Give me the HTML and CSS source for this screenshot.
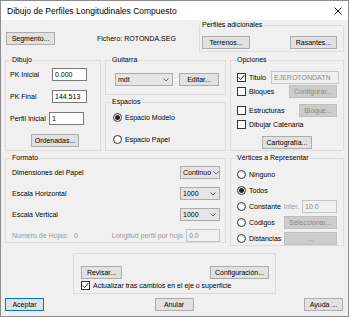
FILE: index.html
```html
<!DOCTYPE html>
<html lang="es">
<head>
    <meta charset="UTF-8">
    <title>Dibujo de Perfiles Longitudinales Compuesto</title>
    <link rel="stylesheet" href="styles.css">
</head>
<body>

<div class="window">
    <div class="titlebar">
        <span class="title">Dibujo de Perfiles Longitudinales Compuesto</span>
        <svg class="close" width="8" height="8" viewBox="0 0 8 8"><path d="M0.5 0.5 L7.5 7.5 M7.5 0.5 L0.5 7.5" stroke="#222" stroke-width="1" fill="none"/></svg>
    </div>

    <div class="content">
        <div class="top-row">
            <div class="file-line">
                <button class="btn btn-segmento">Segmento...</button>
                <span class="fichero">Fichero: ROTONDA.SEG</span>
            </div>
            <fieldset class="group group-perfiles">
                <legend>Perfiles adicionales</legend>
                <div class="perfiles-buttons">
                    <button class="btn btn-terrenos">Terrenos...</button>
                    <button class="btn btn-rasantes">Rasantes...</button>
                </div>
            </fieldset>
        </div>

        <div class="main-grid">
            <!-- Dibujo -->
            <fieldset class="group group-dibujo">
                <legend>Dibujo</legend>
                <div class="group-body dibujo-body">
                    <div class="field-row">
                        <span class="field-label">PK Inicial</span>
                        <input type="text" class="textbox tb-pk" value="0.000">
                    </div>
                    <div class="field-row">
                        <span class="field-label">PK Final</span>
                        <input type="text" class="textbox tb-pk" value="144.513">
                    </div>
                    <div class="field-row">
                        <span class="field-label field-label-perfil">Perfil Inicial</span>
                        <input type="text" class="textbox tb-pk" value="1">
                    </div>
                    <button class="btn btn-ordenadas">Ordenadas...</button>
                </div>
            </fieldset>

            <!-- Guitarra + Espacios -->
            <div class="middle-col">
                <fieldset class="group group-guitarra">
                    <legend>Guitarra</legend>
                    <div class="guitarra-row">
                        <div class="combo combo-guitarra"><span>mdt</span><svg width="6" height="4" viewBox="0 0 6 4"><path d="M0.5 0.5 L3 3 L5.5 0.5" stroke="#666" fill="none"/></svg></div>
                        <button class="btn btn-editar">Editar...</button>
                    </div>
                </fieldset>
                <fieldset class="group group-espacios">
                    <legend>Espacios</legend>
                    <div class="group-body espacios-body">
                        <div class="opt-row"><span class="radio checked"></span>Espacio Modelo</div>
                        <div class="opt-row"><span class="radio"></span>Espacio Papel</div>
                    </div>
                </fieldset>
            </div>

            <!-- Opciones -->
            <fieldset class="group group-opciones">
                <legend>Opciones</legend>
                <div class="group-body opciones-body">
                    <div class="opt-row">
                        <span class="check"><svg width="7" height="7" viewBox="0 0 7 7"><path d="M0.6 3.4 L2.6 5.6 L6.4 0.9" stroke="#222" stroke-width="1" fill="none"/></svg></span>Titulo
                        <input type="text" class="textbox tb-titulo" value="EJEROTONDATN" disabled>
                    </div>
                    <div class="opt-row row-tight">
                        <span class="check"></span>Bloques
                        <button class="btn btn-configurar" disabled>Configurar...</button>
                    </div>
                    <div class="opt-row row-loose">
                        <span class="check"></span>Estructuras
                        <button class="btn btn-bloque" disabled>Bloque...</button>
                    </div>
                    <div class="opt-row row-tight">
                        <span class="check"></span>Dibujar Catenaria
                    </div>
                    <button class="btn btn-cartografia">Cartografía...</button>
                </div>
            </fieldset>

            <!-- Formato -->
            <fieldset class="group group-formato">
                <legend>Formato</legend>
                <div class="group-body formato-body">
                    <div class="formato-row">
                        <span>Dimensiones del Papel</span>
                        <div class="combo combo-small"><span>Continuo</span><svg width="6" height="4" viewBox="0 0 6 4"><path d="M0.5 0.5 L3 3 L5.5 0.5" stroke="#666" fill="none"/></svg></div>
                    </div>
                    <div class="formato-row">
                        <span>Escala Horizontal</span>
                        <div class="combo combo-small"><span>1000</span><svg width="6" height="4" viewBox="0 0 6 4"><path d="M0.5 0.5 L3 3 L5.5 0.5" stroke="#666" fill="none"/></svg></div>
                    </div>
                    <div class="formato-row">
                        <span>Escala Vertical</span>
                        <div class="combo combo-small"><span>1000</span><svg width="6" height="4" viewBox="0 0 6 4"><path d="M0.5 0.5 L3 3 L5.5 0.5" stroke="#666" fill="none"/></svg></div>
                    </div>
                    <div class="formato-row hojas-row">
                        <span class="hojas-label">Numero de Hojas:</span>
                        <span class="hojas-value">0</span>
                        <span class="longitud-label">Longitud perfil por hoja</span>
                        <input type="text" class="textbox tb-longitud" value="0.0" disabled>
                    </div>
                </div>
            </fieldset>

            <!-- Vertices -->
            <fieldset class="group group-vertices">
                <legend>Vértices a Representar</legend>
                <div class="group-body vertices-body">
                    <div class="opt-row"><span class="radio"></span>Ninguno</div>
                    <div class="opt-row"><span class="radio checked"></span>Todos</div>
                    <div class="opt-row">
                        <span class="vert-opt"><span class="radio"></span>Constante</span>
                        <span class="vert-ctrl inter-ctrl">
                            <span class="disabled-text">Inter.</span>
                            <input type="text" class="textbox tb-inter" value="10.0" disabled>
                        </span>
                    </div>
                    <div class="opt-row">
                        <span class="vert-opt"><span class="radio"></span>Códigos</span>
                        <button class="btn vert-ctrl" disabled>Seleccionar...</button>
                    </div>
                    <div class="opt-row">
                        <span class="vert-opt"><span class="radio"></span>Distancias</span>
                        <button class="btn vert-ctrl" disabled>...</button>
                    </div>
                </div>
            </fieldset>
        </div>

        <fieldset class="group group-revisar">
            <div class="revisar-row">
                <button class="btn btn-revisar">Revisar...</button>
                <button class="btn btn-config">Configuración...</button>
            </div>
            <div class="opt-row actualizar-row">
                <span class="check"><svg width="7" height="7" viewBox="0 0 7 7"><path d="M0.6 3.4 L2.6 5.6 L6.4 0.9" stroke="#222" stroke-width="1" fill="none"/></svg></span>Actualizar tras cambios en el eje o superficie
            </div>
        </fieldset>

        <div class="dialog-buttons">
            <button class="btn btn-main btn-default">Aceptar</button>
            <button class="btn btn-main">Anular</button>
            <button class="btn btn-main">Ayuda ...</button>
        </div>
    </div>
</div>

</body>
</html>
```

FILE: styles.css
```css
* {
    box-sizing: border-box;
}
body {
    margin: 0;
    font-family: "Liberation Sans", Arial, sans-serif;
    font-size: 7px;
    color: #000;
    background: #fff;
}
.window {
    width: 349px;
    height: 317px;
    border: 1px solid #8c8c8c;
    background: #f0f0f0;
    display: flex;
    flex-direction: column;
}
.titlebar {
    height: 19px;
    background: #fff;
    display: flex;
    align-items: center;
    justify-content: space-between;
    padding: 0 6px;
    flex-shrink: 0;
}
.title {
    font-size: 8.5px;
}
.content {
    padding: 0 4px;
    display: flex;
    flex-direction: column;
}

/* controls */
.btn {
    font: inherit;
    height: 13px;
    padding: 0;
    border: 1px solid #adadad;
    background: #e1e1e1;
    color: #000;
    line-height: 11px;
}
.btn:disabled {
    background: #cccccc;
    border-color: #bfbfbf;
    color: #8a8a8a;
}
.textbox {
    font: inherit;
    height: 13px;
    padding: 0 2px;
    border: 1px solid #7a7a7a;
    background: #fff;
    color: #000;
}
.textbox:disabled {
    background: #f0f0f0;
    border-color: #c4c4c4;
    color: #8a8a8a;
}
.combo {
    height: 13px;
    border: 1px solid #acacac;
    background: #e5e5e5;
    display: flex;
    align-items: center;
    justify-content: space-between;
    gap: 2px;
    padding: 0 3px 0 2px;
}
.combo svg {
    flex-shrink: 0;
}
.check {
    width: 9px;
    height: 9px;
    border: 1px solid #333;
    background: #fff;
    margin-right: 3px;
    display: inline-flex;
    align-items: center;
    justify-content: center;
    flex-shrink: 0;
}
.radio {
    width: 9px;
    height: 9px;
    border: 1px solid #333;
    border-radius: 50%;
    background: #fff;
    margin-right: 3px;
    display: inline-flex;
    align-items: center;
    justify-content: center;
    flex-shrink: 0;
}
.radio.checked::after {
    content: "";
    width: 5px;
    height: 5px;
    border-radius: 50%;
    background: #222;
}
.disabled-text {
    color: #9a9a9a;
}

/* group boxes */
.group {
    margin: 0;
    padding: 0;
    border: 1px solid #dcdcdc;
    min-width: 0;
}
.group legend {
    padding: 0 1px;
    margin-left: 5px;
    line-height: 10px;
}
.group-body {
    display: flex;
    flex-direction: column;
}
.opt-row {
    display: flex;
    align-items: center;
    height: 13px;
}

/* top row */
.top-row {
    display: flex;
    justify-content: space-between;
    height: 33px;
}
.file-line {
    display: flex;
    align-items: center;
    height: 13px;
    margin-top: 12px;
}
.btn-segmento {
    width: 49px;
    margin-left: 1px;
}
.fichero {
    margin-left: 42px;
}
.group-perfiles {
    width: 145px;
    height: 32px;
}
.group-perfiles legend {
    margin-left: 1px;
}
.perfiles-buttons {
    display: flex;
    justify-content: space-between;
    padding: 6px 6px 0 2px;
}
.btn-terrenos {
    width: 48px;
}
.btn-rasantes {
    width: 47px;
}

/* main grid */
.main-grid {
    display: grid;
    grid-template-columns: 96px 121px 114px;
    column-gap: 4px;
    row-gap: 2px;
    margin-top: 2px;
    align-items: start;
}
.group-dibujo,
.group-opciones {
    height: 96px;
}
.dibujo-body {
    padding: 3px 0 0 4px;
    gap: 9px;
}
.field-row {
    display: flex;
    align-items: center;
    height: 13px;
}
.field-label {
    width: 42px;
}
.field-label-perfil {
    width: 39px;
}
.tb-pk {
    width: 35px;
}
.btn-ordenadas {
    width: 48px;
    align-self: center;
}

.middle-col {
    display: flex;
    flex-direction: column;
    gap: 2px;
    height: 96px;
}
.group-guitarra {
    height: 40px;
}
.guitarra-row {
    display: flex;
    gap: 6px;
    padding: 8px 0 0 9px;
}
.combo-guitarra {
    width: 58px;
}
.btn-editar {
    width: 40px;
}
.group-espacios {
    flex: 1;
}
.espacios-body {
    padding: 4px 0 0 7px;
    gap: 9px;
}

.opciones-body {
    padding: 6px 4px 0 6px;
}
.row-tight {
    margin-top: 1px;
}
.row-loose {
    margin-top: 6px;
}
.tb-titulo {
    width: 68px;
    margin-left: auto;
    background: #fff;
}
.btn-configurar {
    width: 48px;
    margin-left: auto;
    margin-right: 2px;
}
.btn-bloque {
    width: 38px;
    margin-left: auto;
    margin-right: 2px;
}
.btn-cartografia {
    width: 50px;
    margin: 5px 0 0 25px;
}

.group-formato {
    grid-column: 1 / 3;
    height: 90px;
}
.formato-body {
    padding: 3px 5px 0 6px;
    gap: 8px;
}
.formato-row {
    display: flex;
    align-items: center;
    justify-content: space-between;
    height: 13px;
}
.combo-small {
    width: 40px;
}
.hojas-row {
    justify-content: flex-start;
    color: #9a9a9a;
}
.hojas-label {
    width: 62px;
}
.longitud-label {
    margin-left: auto;
    margin-right: 3px;
}
.tb-longitud {
    width: 34px;
}

.group-vertices {
    height: 93px;
}
.vertices-body {
    padding: 5px 6px 0 6px;
    gap: 3px;
}
.vert-opt {
    display: flex;
    align-items: center;
    width: 47px;
}
.vert-ctrl {
    width: 54px;
}
.inter-ctrl {
    display: flex;
    align-items: center;
    justify-content: space-between;
}
.tb-inter {
    width: 35px;
}

/* bottom */
.group-revisar {
    width: 203px;
    height: 41px;
    margin: 7px 0 0 68px;
    padding: 12px 6px 0 7px;
}
.revisar-row {
    display: flex;
    justify-content: space-between;
}
.btn-revisar {
    width: 41px;
}
.btn-config {
    width: 59px;
}
.actualizar-row {
    height: 10px;
    margin-top: 1px;
}
.dialog-buttons {
    display: flex;
    justify-content: space-between;
    margin-top: 4px;
    padding-right: 1px;
}
.btn-main {
    width: 39px;
}
.btn-default {
    border-color: #0078d7;
}
```
